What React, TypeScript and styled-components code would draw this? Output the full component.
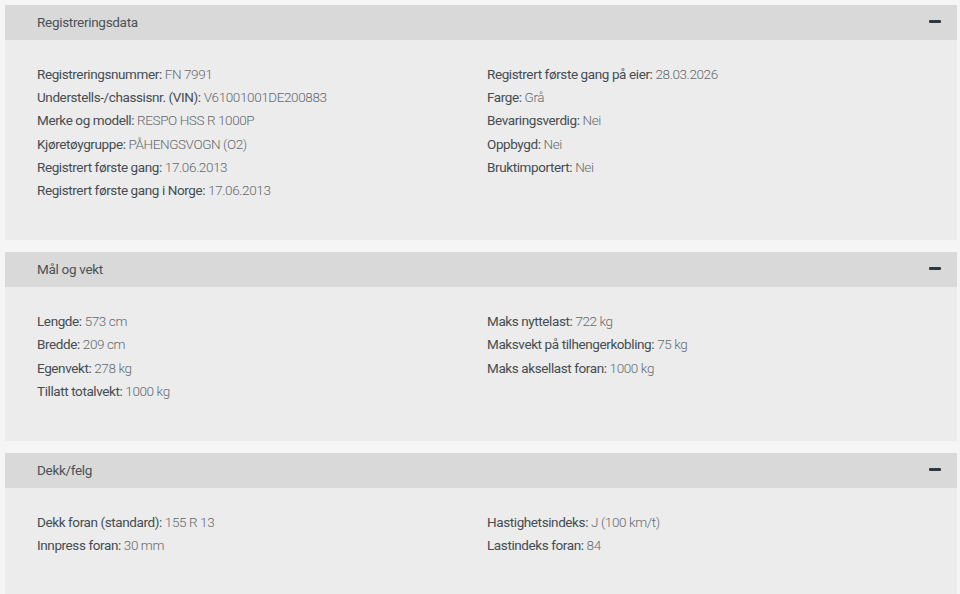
import styled, { createGlobalStyle } from "styled-components"

interface Field {
  label: string
  value: string
}

interface Section {
  title: string
  left: Field[]
  right: Field[]
}

const sections: Section[] = [
  {
    title: "Registreringsdata",
    left: [
      { label: "Registreringsnummer", value: "FN 7991" },
      { label: "Understells-/chassisnr. (VIN)", value: "V61001001DE200883" },
      { label: "Merke og modell", value: "RESPO HSS R 1000P" },
      { label: "Kjøretøygruppe", value: "PÅHENGSVOGN (O2)" },
      { label: "Registrert første gang", value: "17.06.2013" },
      { label: "Registrert første gang i Norge", value: "17.06.2013" },
    ],
    right: [
      { label: "Registrert første gang på eier", value: "28.03.2026" },
      { label: "Farge", value: "Grå" },
      { label: "Bevaringsverdig", value: "Nei" },
      { label: "Oppbygd", value: "Nei" },
      { label: "Bruktimportert", value: "Nei" },
    ],
  },
  {
    title: "Mål og vekt",
    left: [
      { label: "Lengde", value: "573 cm" },
      { label: "Bredde", value: "209 cm" },
      { label: "Egenvekt", value: "278 kg" },
      { label: "Tillatt totalvekt", value: "1000 kg" },
    ],
    right: [
      { label: "Maks nyttelast", value: "722 kg" },
      { label: "Maksvekt på tilhengerkobling", value: "75 kg" },
      { label: "Maks aksellast foran", value: "1000 kg" },
    ],
  },
  {
    title: "Dekk/felg",
    left: [
      { label: "Dekk foran (standard)", value: "155 R 13" },
      { label: "Innpress foran", value: "30 mm" },
    ],
    right: [
      { label: "Hastighetsindeks", value: "J (100 km/t)" },
      { label: "Lastindeks foran", value: "84" },
    ],
  },
]

const GlobalStyle = createGlobalStyle`
  html, body {
    margin: 0;
    background: #f5f5f5;
    font-family: Roboto, "Liberation Sans", sans-serif;
  }
`

const Page = styled.div`
  display: flex;
  flex-direction: column;
  gap: 12px;
  padding: 5px 3px 0 5px;
`

const Panel = styled.section`
  display: flex;
  flex-direction: column;
`

const Header = styled.div`
  height: 35px;
  background: #d9d9d9;
  display: flex;
  align-items: center;
  justify-content: space-between;
  padding: 0 16px 2px 32px;
  box-sizing: border-box;
`

const Title = styled.h2`
  margin: 0;
  font-size: 13.5px;
  font-weight: 400;
  color: #4b5257;
  letter-spacing: -0.3px;
`

const Minus = styled.span`
  width: 12px;
  height: 3px;
  background: #2f383e;
  border-radius: 1px;
`

const Body = styled.div`
  background: #ececec;
  display: grid;
  grid-template-columns: 450px 1fr;
  padding: 23px 32px 38px;
`

const Column = styled.div`
  display: flex;
  flex-direction: column;
`

const Row = styled.div`
  line-height: 23.2px;
  font-size: 13.5px;
  letter-spacing: -0.4px;
  white-space: nowrap;
`

const Label = styled.span`
  color: #454d52;
  font-weight: 400;
`

const Value = styled.span`
  color: #646a6e;
  font-weight: 300;
`

const App = () => {
  return (
    <>
      <GlobalStyle />
      <Page>
        {sections.map((s) => (
          <Panel key={s.title}>
            <Header>
              <Title>{s.title}</Title>
              <Minus />
            </Header>
            <Body>
              <Column>
                {s.left.map((f) => (
                  <Row key={f.label}>
                    <Label>{f.label}:</Label> <Value>{f.value}</Value>
                  </Row>
                ))}
              </Column>
              <Column>
                {s.right.map((f) => (
                  <Row key={f.label}>
                    <Label>{f.label}:</Label> <Value>{f.value}</Value>
                  </Row>
                ))}
              </Column>
            </Body>
          </Panel>
        ))}
      </Page>
    </>
  )
}

export default App
